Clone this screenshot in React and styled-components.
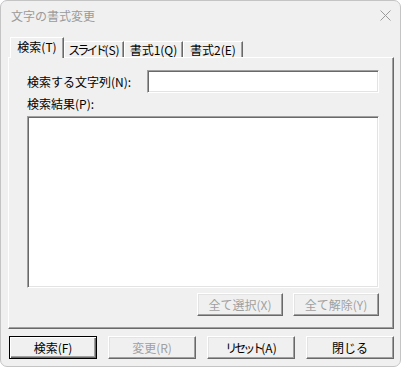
import React from 'react';
import styled, { createGlobalStyle } from 'styled-components';

const tabs = [
  { label: '検索', key: '(T)' },
  { label: 'スライド', key: '(S)', tight: 3 },
  { label: '書式1', key: '(Q)' },
  { label: '書式2', key: '(E)' },
];
const tabWidths = [54, 60, 59, 60];

const App = () => {
  return (
    <>
      <GlobalStyle />
      <Window>
        <TitleBar>
          <Title>文字の書式変更</Title>
          <Close>
            <svg width="11" height="11" viewBox="0 0 11 11">
              <path d="M0.5 0.5 L10.5 10.5 M10.5 0.5 L0.5 10.5" stroke="#9a9a9a" strokeWidth="1" fill="none" />
            </svg>
          </Close>
        </TitleBar>

        <TabStrip>
          {tabs.map((t, i) => (
            <Tab key={t.key} active={i === 0} style={{ width: tabWidths[i] }}>
              <Kana tight={t.tight}>{t.label}</Kana>
              {t.key}
            </Tab>
          ))}
        </TabStrip>

        <Panel>
          <FieldRow>
            <Label>検索する文字列(N):</Label>
            <TextInput />
          </FieldRow>
          <ListLabel>検索結果(P):</ListLabel>
          <ListBox />
          <PanelButtons>
            <Button disabled small>全て選択(X)</Button>
            <Button disabled small>全て解除(Y)</Button>
          </PanelButtons>
        </Panel>

        <Footer>
          <Button primary>検索(F)</Button>
          <Button disabled>変更(R)</Button>
          <Button>
            <Kana tight={3}>リセット</Kana>(A)
          </Button>
          <Button>閉じる</Button>
        </Footer>
      </Window>
    </>
  );
};

//Styled components
const GlobalStyle = createGlobalStyle`
  html, body {
    margin: 0;
    padding: 0;
    background: #ffffff;
  }
  body {
    font-family: "Noto Sans CJK JP", "Noto Sans", sans-serif;
    font-size: 12px;
  }
`;

const Window = styled.div`
  width: 401px;
  height: 367px;
  box-sizing: border-box;
  border: 1px solid #c4c4c4;
  border-radius: 7px;
  background-color: #f0f0f0;
  display: flex;
  flex-direction: column;
  overflow: hidden;
`;

const TitleBar = styled.div`
  height: 36px;
  display: flex;
  align-items: flex-start;
  justify-content: space-between;
  padding: 8px 9px 0 10px;
  box-sizing: border-box;
`;

const Title = styled.div`
  color: #9a9a9a;
  font-size: 12px;
  line-height: 14px;
`;

const Close = styled.div`
  width: 11px;
  height: 11px;
  margin-top: 1px;
  line-height: 0;
`;

const TabStrip = styled.div`
  display: flex;
  align-items: flex-end;
  height: 20px;
  padding-left: 8px;
`;

const Tab = styled.div`
  box-sizing: border-box;
  height: ${({ active }) => (active ? '21px' : '16px')};
  margin-bottom: ${({ active }) => (active ? '-1px' : '0')};
  margin-left: ${({ active }) => (active ? '1px' : '0')};
  position: relative;
  z-index: ${({ active }) => (active ? 1 : 0)};
  background-color: #f0f0f0;
  border-top: 1px solid #ffffff;
  border-left: 1px solid #ffffff;
  border-right: 1px solid #696969;
  box-shadow: inset -1px 0 #a0a0a0;
  display: flex;
  align-items: ${({ active }) => (active ? 'flex-start' : 'center')};
  justify-content: center;
  padding-top: ${({ active }) => (active ? '2px' : '0')};
  color: #000;
  font-size: 12px;
  line-height: 14px;
  white-space: nowrap;
`;

const Kana = styled.span`
  letter-spacing: ${({ tight }) => (tight ? `-${tight}px` : '0')};
`;

const Panel = styled.div`
  width: 386px;
  height: 272px;
  margin-left: 7px;
  box-sizing: border-box;
  border-top: 1px solid #ffffff;
  border-left: 1px solid #ffffff;
  border-right: 1px solid #696969;
  border-bottom: 1px solid #696969;
  box-shadow: inset -1px -1px #a0a0a0;
  padding: 12px 14px 0 18px;
  display: flex;
  flex-direction: column;
`;

const FieldRow = styled.div`
  display: flex;
  align-items: center;
  height: 23px;
`;

const Label = styled.div`
  width: 120px;
  color: #000;
  line-height: 14px;
  white-space: nowrap;
`;

const Sunken = `
  box-sizing: border-box;
  background-color: #ffffff;
  border-top: 1px solid #a0a0a0;
  border-left: 1px solid #a0a0a0;
  border-right: 1px solid #ffffff;
  border-bottom: 1px solid #ffffff;
  box-shadow: inset 1px 1px #696969, inset -1px -1px #e3e3e3;
`;

const TextInput = styled.div`
  ${Sunken}
  width: 232px;
  height: 23px;
`;

const ListLabel = styled.div`
  margin-top: 4px;
  line-height: 14px;
  color: #000;
`;

const ListBox = styled.div`
  ${Sunken}
  margin-top: 5px;
  width: 352px;
  height: 172px;
`;

const PanelButtons = styled.div`
  display: flex;
  justify-content: flex-end;
  gap: 10px;
  width: 352px;
  margin-top: 5px;
`;

const Button = styled.div`
  box-sizing: border-box;
  width: ${({ small }) => (small ? '86px' : '88px')};
  height: 23px;
  display: flex;
  align-items: center;
  justify-content: center;
  font-size: 12px;
  line-height: 14px;
  white-space: nowrap;
  background-color: #f0f0f0;
  color: ${({ disabled }) => (disabled ? '#a0a0a0' : '#000')};
  border: 1px solid;
  border-color: ${({ primary }) =>
    primary ? '#000' : '#ffffff #696969 #696969 #ffffff'};
  box-shadow: ${({ primary }) =>
    primary
      ? 'inset 1px 1px #ffffff, inset -1px -1px #696969, inset -2px -2px #a0a0a0'
      : 'inset -1px -1px #a0a0a0, inset 1px 1px #e3e3e3'};
`;

const Footer = styled.div`
  display: flex;
  gap: 11px;
  padding-left: 8px;
  margin-top: 7px;
`;

export default App;
